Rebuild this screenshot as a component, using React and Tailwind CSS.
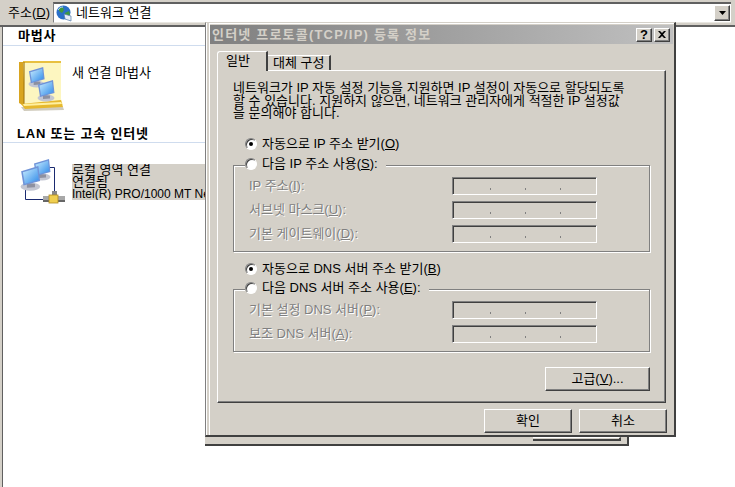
const raised =
  "border border-t-white border-l-white border-r-[#404040] border-b-[#404040] shadow-[inset_-1px_-1px_0_#808080] bg-[#d4d0c8]";
const etched =
  "border border-[#808080] shadow-[1px_1px_0_#fff,inset_1px_1px_0_#fff]";
const disabled = "text-[#808080] [text-shadow:1px_1px_0_#fff]";

function Monitor({ x, y, s = 1, id }) {
  return (
    <g transform={`translate(${x} ${y}) scale(${s})`}>
      <defs>
        <linearGradient id={id} x1="0" y1="0" x2="1" y2="1">
          <stop offset="0" stopColor="#c8ecff" />
          <stop offset="1" stopColor="#2f8ae8" />
        </linearGradient>
      </defs>
      <ellipse cx="9" cy="18" rx="8.500" ry="3.500" fill="#c3c6d2" />
      <path d="M6 15l7 .5v3l-7 .5z" fill="#8d90a0" />
      <path d="M1 4.500L16 0l1.500 13L3 17z" fill="#6f93d8" />
      <path d="M2.500 5.500L15 1.800l1.200 10.400L4.200 15.500z" fill={`url(#${id})`} />
    </g>
  );
}

function WizardIcon() {
  return (
    <svg width="48" height="52" viewBox="0 0 48 52" className="shrink-0">
      <path d="M3 47l42 0 1 3-40 1z" fill="#b0a990" opacity=".6" />
      <path d="M1 2h5v44l-5-3z" fill="#d9a520" />
      <path d="M5 1h38v38l2 6H7z" fill="#fdf6c0" />
      <path d="M5 1h38v2H5z" fill="#e8c040" />
      <path d="M6 2v43" stroke="#a87c10" strokeWidth="1.200" />
      <path d="M3 44l40-4 2 7-38 2z" fill="#e6b82e" />
      <path d="M5 44l38-2 1 2-38 2z" fill="#fff0a0" />
      <Monitor x={10} y={7} s={0.95} id="wa" />
      <Monitor x={19} y={20} s={1} id="wb" />
    </svg>
  );
}

function LanIcon() {
  return (
    <svg width="50" height="50" viewBox="0 0 50 50" className="shrink-0">
      <path d="M27 9.500h9.500v25" fill="none" stroke="#1a2a70" strokeWidth="1" />
      <path d="M7.500 28v13.500h18" fill="none" stroke="#1a2a70" strokeWidth="1" />
      <Monitor x={15} y={1} s={1} id="la" />
      <Monitor x={2} y={8} s={1.150} id="lb" />
      <rect x="25" y="38" width="22" height="5" fill="#a8a8a8" />
      <rect x="25" y="42" width="22" height="2" fill="#666" />
      <rect x="34" y="33" width="5" height="5" fill="#888" />
      <rect x="31" y="37" width="9" height="8" fill="#f0cf50" stroke="#b08a20" strokeWidth=".8" />
    </svg>
  );
}

function GlobeIcon() {
  return (
    <svg width="17" height="17" viewBox="0 0 17 17" className="shrink-0">
      <circle cx="7.500" cy="7.500" r="7" fill="#2a70c8" />
      <path d="M3 3l4-1 1 3-2 3-3-2zM9 8l4-2 1 3-3 4-2-2z" fill="#3f9a40" />
      <path d="M2 5c1-2 3-3 5-3" stroke="#bfe0ff" fill="none" />
      <path d="M8 9l7 2v5l-6-2z" fill="#e8eef8" stroke="#5078a8" strokeWidth=".7" />
    </svg>
  );
}

function Radio({ checked }) {
  return (
    <span className="relative block w-3 h-3 shrink-0 rounded-full bg-white border border-t-[#808080] border-l-[#808080] border-r-white border-b-white shadow-[inset_1px_1px_0_#404040]">
      {checked && <span className="absolute left-[3px] top-[3px] w-1 h-1 rounded-full bg-black" />}
    </span>
  );
}

function RadioRow({ checked, legend, children }) {
  return (
    <div
      className={
        "flex items-center gap-[5px] h-[14px] w-fit " +
        (legend ? "bg-[#d4d0c8] -mt-[9px] pr-2 ml-[11px]" : "ml-3")
      }
    >
      <Radio checked={checked} />
      <span>{children}</span>
    </div>
  );
}

function IpRow({ children }) {
  return (
    <div className="flex items-center h-[18px]">
      <span className={"w-[218px] pl-[15px] " + disabled}>{children}</span>
      <div className="w-[145px] h-[18px] flex items-end gap-[34px] pl-[37px] pb-1 border border-t-[#808080] border-l-[#808080] border-r-white border-b-white shadow-[inset_1px_1px_0_#404040]">
        <span className="w-px h-[2px] bg-[#808080]" />
        <span className="w-px h-[2px] bg-[#808080]" />
        <span className="w-px h-[2px] bg-[#808080]" />
      </div>
    </div>
  );
}

function Dialog() {
  return (
    <div className="absolute left-[205px] top-[22px] w-[471px] h-[415px] bg-[#d4d0c8] pl-1 pr-px pt-[2px] border-r-2 border-b-2 border-r-[#404040] border-b-[#404040] border-l border-t border-l-[#808080] border-t-[#d4d0c8] shadow-[inset_1px_0_0_#fff,inset_3px_0_0_#d4d0c8,inset_4px_0_0_#fff,inset_0_1px_0_#fff]">
      <div className="h-[19px] flex items-center justify-between pl-[2px] pr-[3px] bg-gradient-to-r from-[#808080] to-[#c0c0c0]">
        <span className="font-bold tracking-[1.200px] text-[#d4d0c8]">인터넷 프로토콜(TCP/IP) 등록 정보</span>
        <div className="flex gap-[2px]">
          <span className={"w-4 h-[14px] flex items-center justify-center font-bold text-black leading-none " + raised}>?</span>
          <span className={"w-4 h-[14px] flex items-center justify-center " + raised}>
            <svg width="8" height="7" viewBox="0 0 8 7">
              <path d="M0 0h2l2 2 2-2h2L5 3.500 8 7H6L4 5 2 7H0l3-3.500z" fill="#000" />
            </svg>
          </span>
        </div>
      </div>

      <div className="ml-[7px] mt-[7px] w-[449px]">
        <div className="flex items-end h-[19px] relative z-10">
          <div className="w-[51px] h-[20px] -mb-px pl-[8px] pt-[3px] bg-[#d4d0c8] border-t border-l border-white rounded-tl-[3px] border-r-2 border-r-[#404040]">일반</div>
          <div className="w-[63px] h-[15px] flex items-center pl-[5px] border-t border-white border-r-2 border-r-[#404040] whitespace-nowrap">대체 구성</div>
        </div>
        <div className="h-[333px] flex flex-col border border-t-white border-l-white border-r-[#404040] border-b-[#404040] shadow-[inset_-1px_-1px_0_#808080] pl-[15px] pr-[15px] whitespace-nowrap">
          <p className="mt-[11px] leading-[12.500px]">
            네트워크가 IP 자동 설정 기능을 지원하면 IP 설정이 자동으로 할당되도록
            <br />
            할 수 있습니다. 지원하지 않으면, 네트워크 관리자에게 적절한 IP 설정값
            <br />
            을 문의해야 합니다.
          </p>
          <div className="mt-[17px]">
            <RadioRow checked>자동으로 IP 주소 받기(<u>O</u>)</RadioRow>
          </div>
          <div className={"mt-[14px] w-[417px] h-[87px] flex flex-col gap-[6px] " + etched}>
            <RadioRow legend>다음 IP 주소 사용(<u>S</u>):</RadioRow>
            <IpRow>IP 주소(<u>I</u>):</IpRow>
            <IpRow>서브넷 마스크(<u>U</u>):</IpRow>
            <IpRow>기본 게이트웨이(<u>D</u>):</IpRow>
          </div>
          <div className="mt-[10px]">
            <RadioRow checked>자동으로 DNS 서버 주소 받기(<u>B</u>)</RadioRow>
          </div>
          <div className={"mt-[13px] w-[417px] h-[63px] flex flex-col gap-[6px] " + etched}>
            <RadioRow legend>다음 DNS 서버 주소 사용(<u>E</u>):</RadioRow>
            <IpRow>기본 설정 DNS 서버(<u>P</u>):</IpRow>
            <IpRow>보조 DNS 서버(<u>A</u>):</IpRow>
          </div>
          <div className="flex justify-end mt-[15px]">
            <button className={"w-[105px] h-[24px] " + raised}>고급(<u>V</u>)...</button>
          </div>
        </div>
        <div className="flex justify-end gap-[7px] mt-[6px] -mr-px">
          <button className={"w-[88px] h-[24px] " + raised}>확인</button>
          <button className={"w-[88px] h-[24px] " + raised}>취소</button>
        </div>
      </div>
    </div>
  );
}

export default function App() {
  return (
    <div className="relative w-[735px] h-[487px] overflow-hidden bg-white text-black text-[13px] leading-[12px] font-['Liberation_Sans','Noto_Sans_CJK_KR',sans-serif]">
      <div className="h-[27px] bg-[#d4d0c8] border-b-2 border-b-[#606060] flex pt-[2px]">
        <span className="w-[53px] h-[21px] pl-[8px] flex items-center">주소(<u>D</u>)</span>
        <div className="flex-1 h-[21px] mr-[4px] bg-white border-t-2 border-t-[#606060] border-l border-l-[#808080] flex items-center pl-[2px] gap-[3px] border-b border-b-[#e8e6e0]">
          <GlobeIcon />
          <span className="flex-1">네트워크 연결</span>
          <span className={"w-[16px] h-[16px] mr-[1px] flex items-center justify-center " + raised}>
            <svg width="7" height="4" viewBox="0 0 7 4"><path d="M0 0h7L3.500 4z" fill="#000" /></svg>
          </span>
        </div>
      </div>

      <div className="w-[206px] h-[460px] pl-[2px] bg-[#d4d0c8]">
        <div className="h-full border-l border-l-[#606060] bg-white overflow-hidden whitespace-nowrap">
          <div className="h-[19px] pl-[15px] flex items-center font-bold tracking-[0.800px] border-b border-b-[#cfdcee]">마법사</div>
          <div className="flex items-start gap-[6px] mt-[14px] pl-[15px] h-[65px]">
            <WizardIcon />
            <span className="mt-[7px]">새 연결 마법사</span>
          </div>
          <div className="h-[18px] pl-[14px] flex items-center font-bold tracking-[0.800px] border-b border-b-[#cfdcee]">LAN 또는 고속 인터넷</div>
          <div className="flex items-start gap-[4px] mt-[15px] pl-[15px]">
            <LanIcon />
            <div className="flex-1 mt-[6px] h-[36px] bg-[#d4d0c8] flex flex-col overflow-hidden">
              <span>로컬 영역 연결</span>
              <span>연결됨</span>
              <span className="text-[12px]">Intel(R) PRO/1000 MT Network</span>
            </div>
          </div>
        </div>
      </div>

      <div className="absolute left-[205px] top-[300px] w-[424px] h-[146px] bg-[#d4d0c8] border-r-2 border-b-2 border-[#404040]" />
      <div className="absolute left-[533px] top-[437px] w-[88px] h-[4px] border-r-2 border-b-2 border-[#404040] border-t border-t-white" />
      <Dialog />
    </div>
  );
}
